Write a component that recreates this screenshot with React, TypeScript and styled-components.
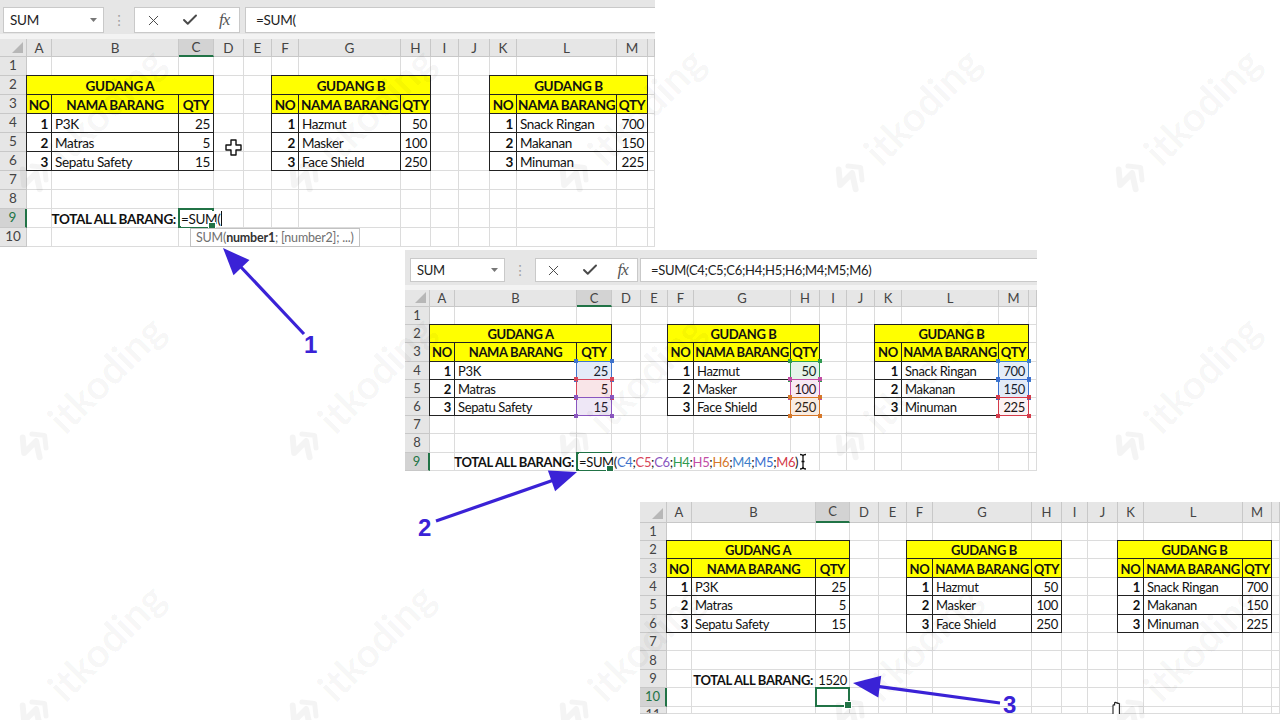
import React from "react";
import styled, { createGlobalStyle, css } from "styled-components";
import { X, Check } from "lucide-react";

const GREEN = "#217346";
const YELLOW = "#ffff00";
const INK = "#3a22d6";
const FONT = `"Lato", "Liberation Sans", sans-serif`;

const LETTERS = "ABCDEFGHIJKLM".split("");
const col = (l: string) => LETTERS.indexOf(l) + 2;
const row = (n: number) => n + 1;

const GlobalStyle = createGlobalStyle`
  html, body { margin: 0; padding: 0; background: #fff; }
  body { font-family: ${FONT}; color: #111; }
  * { box-sizing: border-box; }
`;

type Pos = { $c: number; $r: number; $cs?: number; $rs?: number };
const placed = css<Pos>`
  grid-column: ${(p) => p.$c} / span ${(p) => p.$cs ?? 1};
  grid-row: ${(p) => p.$r} / span ${(p) => p.$rs ?? 1};
`;

/* ---------- page ---------- */

const Page = styled.div`
  position: relative;
  width: 1280px;
  height: 720px;
  overflow: hidden;
  background: #fff;
  display: flex;
  flex-direction: column;
  align-items: flex-start;
`;

const Shot = styled.div<{ $x: number; $gap: number; $w: number }>`
  flex: none;
  margin-left: ${(p) => p.$x}px;
  margin-top: ${(p) => p.$gap}px;
  width: ${(p) => p.$w}px;
  overflow: hidden;
`;

/* ---------- formula bar ---------- */

const Bar = styled.div<{ $h: number; $pad: number; $fs: number }>`
  display: flex;
  align-items: flex-start;
  height: ${(p) => p.$h}px;
  padding-top: ${(p) => p.$pad}px;
  background: #e6e6e6;
  border-bottom: 5px solid #f3f3f3;
  font-size: ${(p) => p.$fs}px;
  letter-spacing: -0.3px;
`;

const NameBox = styled.div<{ $x: number; $w: number; $h: number }>`
  margin-left: ${(p) => p.$x}px;
  width: ${(p) => p.$w}px;
  height: ${(p) => p.$h}px;
  background: #fff;
  border: 1px solid #c9c9c9;
  display: flex;
  align-items: center;
  justify-content: space-between;
  padding: 0 6px 0 6px;
  color: #222;
`;

const Grip = styled.div<{ $w: number; $h: number }>`
  width: ${(p) => p.$w}px;
  height: ${(p) => p.$h}px;
  display: flex;
  align-items: center;
  justify-content: center;
  color: #a0a0a0;
  font-family: "DejaVu Sans", sans-serif;
  font-size: 14px;
`;

const ToolBox = styled.div<{ $w: number; $h: number }>`
  width: ${(p) => p.$w}px;
  height: ${(p) => p.$h}px;
  background: #fff;
  border: 1px solid #c9c9c9;
  display: flex;
  align-items: center;
  justify-content: space-around;
  color: #4a4a4a;
`;

const Fx = styled.span`
  font-family: "Liberation Serif", serif;
  font-style: italic;
  font-size: 17px;
  color: #555;
  letter-spacing: -1px;
`;

const InputBox = styled.div<{ $gap: number; $h: number }>`
  flex: 1;
  margin-left: ${(p) => p.$gap}px;
  height: ${(p) => p.$h}px;
  background: #fff;
  border: 1px solid #c9c9c9;
  border-right: none;
  display: flex;
  align-items: center;
  padding-left: 10px;
  color: #222;
  white-space: nowrap;
`;

type BarDims = { h: number; pad: number; boxH: number; nameX: number; nameW: number; gripW: number; toolsW: number; gap: number; fs: number };

const FormulaBar: React.FC<{ d: BarDims; formula: string }> = ({ d, formula }) => (
  <Bar $h={d.h} $pad={d.pad} $fs={d.fs}>
    <NameBox $x={d.nameX} $w={d.nameW} $h={d.boxH}>
      SUM
      <svg width="7" height="4" viewBox="0 0 7 4">
        <path d="M0 0h7L3.5 4z" fill="#777" />
      </svg>
    </NameBox>
    <Grip $w={d.gripW} $h={d.boxH}>⋮</Grip>
    <ToolBox $w={d.toolsW} $h={d.boxH}>
      <X size={17} strokeWidth={1.4} />
      <Check size={18} strokeWidth={2.6} />
      <Fx>fx</Fx>
    </ToolBox>
    <InputBox $gap={d.gap} $h={d.boxH}>{formula}</InputBox>
  </Bar>
);

/* ---------- grid ---------- */

const Grid = styled.div<{ $cols: number[]; $rows: string; $fs: number }>`
  display: grid;
  grid-template-columns: ${(p) => p.$cols.map((w) => `${w}px`).join(" ")};
  grid-template-rows: ${(p) => p.$rows};
  font-size: ${(p) => p.$fs}px;
  letter-spacing: -0.35px;
  background: #fff;
  overflow: hidden;
`;

const Corner = styled.div<Pos>`
  ${placed}
  position: relative;
  background: #e6e6e6;
  border-right: 1px solid #c8c8c8;
  border-bottom: 1px solid #c8c8c8;
  &::after {
    content: "";
    position: absolute;
    right: 3px;
    bottom: 3px;
    border-left: 11px solid transparent;
    border-bottom: 11px solid #b7b7b7;
  }
`;

const ColHead = styled.div<Pos & { $sel?: boolean }>`
  ${placed}
  display: flex;
  align-items: center;
  justify-content: center;
  background: ${(p) => (p.$sel ? "#d3d3d3" : "#e6e6e6")};
  color: #444;
  letter-spacing: 0;
  border-right: 1px solid #c8c8c8;
  border-bottom: ${(p) => (p.$sel ? `2px solid ${GREEN}` : "1px solid #c8c8c8")};
`;

const RowHead = styled.div<Pos & { $sel?: boolean; $cut?: boolean }>`
  ${placed}
  display: flex;
  align-items: ${(p) => (p.$cut ? "flex-start" : "center")};
  justify-content: center;
  padding-top: ${(p) => (p.$cut ? 1 : 0)}px;
  overflow: hidden;
  line-height: 1;
  background: ${(p) => (p.$sel ? "#d3d3d3" : "#e6e6e6")};
  color: ${(p) => (p.$sel ? GREEN : "#444")};
  letter-spacing: 0;
  border-bottom: 1px solid #c8c8c8;
  border-right: ${(p) => (p.$sel ? `2px solid ${GREEN}` : "1px solid #c8c8c8")};
`;

const Cell = styled.div<Pos>`
  ${placed}
  border-right: 1px solid #dcdcdc;
  border-bottom: 1px solid #dcdcdc;
`;

type Align = "left" | "center" | "right";
const justify = (a?: Align) => (a === "center" ? "center" : a === "right" ? "flex-end" : "flex-start");

const TCell = styled.div<Pos & { $fill?: string; $align?: Align; $bold?: boolean }>`
  ${placed}
  margin: -1px 0 0 -1px;
  border: 1px solid #222;
  background: ${(p) => p.$fill ?? "#fff"};
  display: flex;
  align-items: center;
  justify-content: ${(p) => justify(p.$align)};
  padding: 1px 3px 0;
  font-weight: ${(p) => (p.$bold ? 700 : 400)};
  white-space: nowrap;
  overflow: hidden;
`;

const Label = styled.div<Pos & { $align?: Align; $bold?: boolean }>`
  ${placed}
  display: flex;
  align-items: center;
  justify-content: ${(p) => justify(p.$align)};
  padding: 1px 3px 0;
  font-weight: ${(p) => (p.$bold ? 700 : 400)};
  white-space: nowrap;
`;

const SelBox = styled.div<Pos>`
  ${placed}
  position: relative;
  margin: -1px 0 0 -1px;
  border: 2px solid ${GREEN};
  display: flex;
  align-items: center;
  padding: 1px 0 0 1px;
  white-space: nowrap;
  overflow: visible;
  z-index: 2;
  &::after {
    content: "";
    position: absolute;
    right: -4px;
    bottom: -4px;
    width: 6px;
    height: 6px;
    background: ${GREEN};
    border: 1px solid #fff;
  }
`;

const EditText = styled.span`
  display: inline-flex;
  align-items: center;
  background: #fff;
  padding-right: 2px;
`;

const Caret = styled.span`
  display: inline-block;
  width: 1px;
  height: 15px;
  margin-left: 1px;
  background: #111;
`;

const RefBox = styled.div<Pos & { $color: string; $fill: string }>`
  ${placed}
  position: relative;
  margin: -1px 0 0 -1px;
  border: 1px solid ${(p) => p.$color};
  background: ${(p) => p.$fill};
  pointer-events: none;
`;

const Knob = styled.span<{ $color: string; $v: "top" | "bottom"; $h: "left" | "right" }>`
  position: absolute;
  width: 4px;
  height: 4px;
  background: ${(p) => p.$color};
  ${(p) => p.$v}: -3px;
  ${(p) => p.$h}: -3px;
`;

const Tip = styled.div<Pos>`
  ${placed}
  justify-self: start;
  margin-left: 11px;
  display: flex;
  align-items: center;
  padding: 0 5px;
  background: #fff;
  border: 1px solid #c2c2c2;
  color: #707070;
  font-size: 12.5px;
  letter-spacing: -0.2px;
  white-space: nowrap;
  z-index: 3;
  b {
    color: #333;
    font-weight: 700;
  }
`;

const Pointer = styled.div<Pos & { $dx: number; $dy: number }>`
  ${placed}
  padding: ${(p) => `${p.$dy}px 0 0 ${p.$dx}px`};
  overflow: visible;
  z-index: 4;
`;

/* ---------- data ---------- */

const TABLES: { at: string; title: string; items: [string, number][] }[] = [
  { at: "A", title: "GUDANG A", items: [["P3K", 25], ["Matras", 5], ["Sepatu Safety", 15]] },
  { at: "F", title: "GUDANG B", items: [["Hazmut", 50], ["Masker", 100], ["Face Shield", 250]] },
  { at: "K", title: "GUDANG B", items: [["Snack Ringan", 700], ["Makanan", 150], ["Minuman", 225]] },
];

const REFS = [
  { ref: "C4", color: "#3f73cc", fill: "rgba(63,115,204,0.14)" },
  { ref: "C5", color: "#d8465a", fill: "rgba(216,70,90,0.14)" },
  { ref: "C6", color: "#8a56bf", fill: "rgba(138,86,191,0.14)" },
  { ref: "H4", color: "#2f9a50", fill: "rgba(47,154,80,0.12)" },
  { ref: "H5", color: "#c24ca4", fill: "rgba(194,76,164,0.12)" },
  { ref: "H6", color: "#d6782a", fill: "rgba(214,120,42,0.14)" },
  { ref: "M4", color: "#3d7fca", fill: "rgba(61,127,202,0.14)" },
  { ref: "M5", color: "#3a6fd0", fill: "rgba(58,111,208,0.14)" },
  { ref: "M6", color: "#d43a4a", fill: "rgba(212,58,74,0.06)" },
];

const refPos = (ref: string) => ({ c: col(ref[0]), r: row(Number(ref.slice(1))) });

const Tables: React.FC = () => (
  <>
    {TABLES.map((t) => {
      const c0 = col(t.at);
      return (
        <React.Fragment key={t.at}>
          <TCell $c={c0} $r={row(2)} $cs={3} $fill={YELLOW} $align="center" $bold>
            {t.title}
          </TCell>
          <TCell $c={c0} $r={row(3)} $fill={YELLOW} $align="center" $bold>NO</TCell>
          <TCell $c={c0 + 1} $r={row(3)} $fill={YELLOW} $align="center" $bold>NAMA BARANG</TCell>
          <TCell $c={c0 + 2} $r={row(3)} $fill={YELLOW} $align="center" $bold>QTY</TCell>
          {t.items.map(([name, qty], i) => (
            <React.Fragment key={name}>
              <TCell $c={c0} $r={row(4 + i)} $align="right" $bold>{i + 1}</TCell>
              <TCell $c={c0 + 1} $r={row(4 + i)}>{name}</TCell>
              <TCell $c={c0 + 2} $r={row(4 + i)} $align="right">{qty}</TCell>
            </React.Fragment>
          ))}
        </React.Fragment>
      );
    })}
  </>
);

type SheetProps = {
  widths: number[];
  headH: number;
  rowH: number;
  rows: number;
  tail?: number;
  fs: number;
  selRow: number;
  children?: React.ReactNode;
};

const Sheet: React.FC<SheetProps> = ({ widths, headH, rowH, rows, tail, fs, selRow, children }) => {
  const total = rows + (tail ? 1 : 0);
  const tpl = `${headH}px repeat(${rows}, ${rowH}px)${tail ? ` ${tail}px` : ""}`;
  const cells: React.ReactNode[] = [<Corner key="corner" $c={1} $r={1} />];
  for (let c = 2; c <= widths.length; c++) {
    cells.push(
      <ColHead key={`h${c}`} $c={c} $r={1} $sel={c === col("C")}>
        {LETTERS[c - 2] ?? ""}
      </ColHead>
    );
  }
  for (let r = 1; r <= total; r++) {
    cells.push(
      <RowHead key={`r${r}`} $c={1} $r={row(r)} $sel={r === selRow} $cut={r > rows}>
        {r}
      </RowHead>
    );
    for (let c = 2; c <= widths.length; c++) cells.push(<Cell key={`c${r}-${c}`} $c={c} $r={row(r)} />);
  }
  return (
    <Grid $cols={widths} $rows={tpl} $fs={fs}>
      {cells}
      <Tables />
      <Label $c={col("B")} $r={row(9)} $align="right" $bold>
        TOTAL ALL BARANG:
      </Label>
      {children}
    </Grid>
  );
};

/* ---------- cursors ---------- */

const MoveCross = () => (
  <svg width="17" height="17" viewBox="0 0 17 17">
    <path
      d="M6 1h5v5h5v5h-5v5H6v-5H1V6h5z"
      fill="#fff"
      stroke="#111"
      strokeWidth="1.4"
      strokeLinejoin="round"
    />
  </svg>
);

const IBeam = () => (
  <svg width="8" height="17" viewBox="0 0 8 17" style={{ marginLeft: 1 }}>
    <path d="M1 1.5c2 0 3 .5 3 2V14c0 1.5-1 2-3 2M7 1.5c-2 0-3 .5-3 2M4 14c0 1.5 1 2 3 2M2.5 8.5h3" stroke="#111" strokeWidth="1.3" fill="none" />
  </svg>
);

const Hand = () => (
  <svg width="16" height="14" viewBox="0 0 16 14">
    <path
      d="M5 14V5.5c0-1 1.6-1 1.6 0V3c0-1 1.6-1 1.6 0v.5c0-1 1.6-1 1.6 0V4c0-1 1.6-1 1.6 0V14"
      fill="#fff"
      stroke="#222"
      strokeWidth="1.1"
    />
  </svg>
);

/* ---------- overlays ---------- */

const Overlay = styled.svg`
  position: absolute;
  left: 0;
  top: 0;
  width: 1280px;
  height: 720px;
  pointer-events: none;
`;

const Num = styled.text`
  font-family: "Liberation Sans", Arial, sans-serif;
  font-weight: 700;
  font-size: 24px;
  fill: ${INK};
`;

type Pt = [number, number];
const ARROWS: { tail: Pt; tip: Pt; label: string; at: Pt }[] = [
  { tail: [304, 334], tip: [223, 248], label: "1", at: [304, 353] },
  { tail: [436, 521], tip: [577, 472], label: "2", at: [418, 536] },
  { tail: [1000, 703], tip: [853, 683], label: "3", at: [1003, 713] },
];

const Arrow: React.FC<{ tail: Pt; tip: Pt }> = ({ tail, tip }) => {
  const dx = tip[0] - tail[0];
  const dy = tip[1] - tail[1];
  const len = Math.hypot(dx, dy);
  const ux = dx / len;
  const uy = dy / len;
  const L = 27;
  const W = 11;
  const bx = tip[0] - ux * L;
  const by = tip[1] - uy * L;
  const pts = [tip, [bx - uy * W, by + ux * W], [bx + uy * W, by - ux * W]].map((p) => p.join(",")).join(" ");
  return (
    <>
      <line x1={tail[0]} y1={tail[1]} x2={bx + ux * 4} y2={by + uy * 4} stroke={INK} strokeWidth={3.2} />
      <polygon points={pts} fill={INK} />
    </>
  );
};

const Marks = styled.div`
  position: absolute;
  inset: 0;
  pointer-events: none;
  overflow: hidden;
`;

const Mark = styled.div<{ $x: number; $y: number }>`
  position: absolute;
  left: ${(p) => p.$x}px;
  top: ${(p) => p.$y - 22}px;
  height: 44px;
  display: flex;
  align-items: center;
  gap: 8px;
  transform-origin: 0 50%;
  transform: rotate(-45deg);
  color: rgba(0, 0, 0, 0.045);
  font-family: "Lato", sans-serif;
  font-weight: 700;
  font-size: 40px;
  white-space: nowrap;
`;

const MARK_SPOTS = [22, 292, 562, 838, 1118].flatMap((x) => [190, 458, 726].map((y) => ({ x, y })));

const Logo = () => (
  <svg width="38" height="38" viewBox="0 0 38 38">
    <path d="M15 5 5 17h17L13 31" stroke="currentColor" strokeWidth="6" fill="none" strokeLinejoin="round" strokeLinecap="round" />
    <path d="M24 9 32 19 24 29" stroke="currentColor" strokeWidth="5" fill="none" strokeLinejoin="round" strokeLinecap="round" />
  </svg>
);

/* ---------- sheets ---------- */

const BAR1: BarDims = { h: 39, pad: 7, boxH: 26, nameX: 3, nameW: 101, gripW: 30, toolsW: 106, gap: 5, fs: 13.5 };
const BAR2: BarDims = { h: 40, pad: 8, boxH: 24, nameX: 5, nameW: 95, gripW: 30, toolsW: 103, gap: 2, fs: 13 };

const W1 = [27, 25, 127, 35, 30, 28, 27, 102, 30, 28, 31, 27, 100, 31, 7];
const W2 = [25, 25, 122, 35, 29, 27, 26, 97, 29, 27, 28, 27, 97, 30, 8];
const W3 = [27, 25, 124, 34, 29, 28, 26, 99, 30, 26, 30, 26, 99, 29, 8];

const FORMULA = "=SUM(C4;C5;C6;H4;H5;H6;M4;M5;M6)";

const App: React.FC = () => (
  <>
    <GlobalStyle />
    <Page>
      <Shot $x={0} $gap={0} $w={655}>
        <FormulaBar d={BAR1} formula="=SUM(" />
        <Sheet widths={W1} headH={18} rowH={19} rows={10} fs={13.5} selRow={9}>
          <SelBox $c={col("C")} $r={row(9)}>
            <EditText>
              =SUM(
              <Caret />
            </EditText>
          </SelBox>
          <Tip $c={col("C")} $r={row(10)} $cs={6}>
            SUM(<b>number1</b>; [number2]; ...)
          </Tip>
          <Pointer $c={col("D")} $r={row(5)} $dx={11} $dy={6}>
            <MoveCross />
          </Pointer>
        </Sheet>
      </Shot>

      <Shot $x={405} $gap={3} $w={632}>
        <FormulaBar d={BAR2} formula={FORMULA} />
        <Sheet widths={W2} headH={17} rowH={18.2} rows={9} fs={13} selRow={9}>
          {REFS.map((r) => {
            const p = refPos(r.ref);
            return (
              <RefBox key={r.ref} $c={p.c} $r={p.r} $color={r.color} $fill={r.fill}>
                <Knob $color={r.color} $v="top" $h="left" />
                <Knob $color={r.color} $v="top" $h="right" />
                <Knob $color={r.color} $v="bottom" $h="left" />
                <Knob $color={r.color} $v="bottom" $h="right" />
              </RefBox>
            );
          })}
          <SelBox $c={col("C")} $r={row(9)}>
            <EditText>
              =SUM(
              {REFS.map((r, i) => (
                <React.Fragment key={r.ref}>
                  <span style={{ color: r.color }}>{r.ref}</span>
                  {i < REFS.length - 1 ? ";" : ")"}
                </React.Fragment>
              ))}
              <IBeam />
            </EditText>
          </SelBox>
        </Sheet>
      </Shot>

      <Shot $x={640} $gap={31} $w={640}>
        <Sheet widths={W3} headH={21} rowH={18.4} rows={10} tail={7} fs={13} selRow={10}>
          <Label $c={col("C")} $r={row(9)} $align="right">
            1520
          </Label>
          <SelBox $c={col("C")} $r={row(10)} />
          <Pointer $c={col("J")} $r={row(10)} $dx={20} $dy={12}>
            <Hand />
          </Pointer>
        </Sheet>
      </Shot>

      <Marks>
        {MARK_SPOTS.map((m) => (
          <Mark key={`${m.x}-${m.y}`} $x={m.x} $y={m.y}>
            <Logo />
            itkoding
          </Mark>
        ))}
      </Marks>

      <Overlay viewBox="0 0 1280 720">
        {ARROWS.map((a) => (
          <React.Fragment key={a.label}>
            <Arrow tail={a.tail} tip={a.tip} />
            <Num x={a.at[0]} y={a.at[1]}>
              {a.label}
            </Num>
          </React.Fragment>
        ))}
      </Overlay>
    </Page>
  </>
);

export default App;
